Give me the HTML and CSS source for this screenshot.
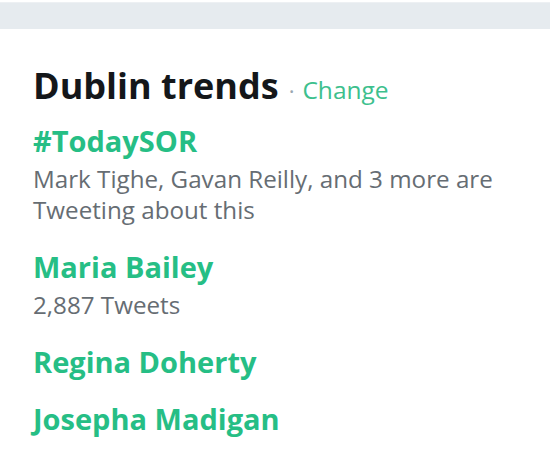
FILE: index.html
```html
<!DOCTYPE html>
<html>
<head>
<meta charset="utf-8">
<link rel="stylesheet" href="styles.css">
</head>
<body>
<div class="band"></div>
<div class="card">
  <div class="head"><span class="title">Dublin trends</span><span class="dot">·</span><span class="change">Change</span></div>
  <div class="trends">
    <div class="trend">
      <div class="name">#TodaySOR</div>
      <div class="meta">Mark Tighe, Gavan Reilly, and 3 more are<br>Tweeting about this</div>
    </div>
    <div class="trend">
      <div class="name">Maria Bailey</div>
      <div class="meta">2,887 Tweets</div>
    </div>
    <div class="trend">
      <div class="name">Regina Doherty</div>
    </div>
    <div class="trend">
      <div class="name">Josepha Madigan</div>
    </div>
  </div>
</div>
</body>
</html>
```
FILE: styles.css
```css
html, body { margin: 0; padding: 0; background: #fff; }
body { font-family: "Open Sans", "Noto Sans", sans-serif; width: 550px; height: 466px; overflow: hidden; }
.band { height: 27px; margin-top: 2px; background: #e6ebef; border-top: 1px solid #edf0f3; box-sizing: border-box; }
.card { padding: 35px 0 0 33px; }
.head { display: flex; align-items: baseline; height: 44px; }
.title { font-size: 36px; line-height: 44px; font-weight: 700; color: #14171a; }
.dot { font-size: 22px; color: #9aa6b0; margin: 0 8px 0 10px; }
.change { font-size: 24.5px; color: #3dc08d; }
.trends { display: flex; flex-direction: column; gap: 21px; margin-top: 15px; }
.name { font-size: 29px; font-weight: 700; color: #26be85; line-height: 36px; }
.meta { font-size: 24.2px; color: #666d73; line-height: 31px; margin: 4px 0 3px; }
```
